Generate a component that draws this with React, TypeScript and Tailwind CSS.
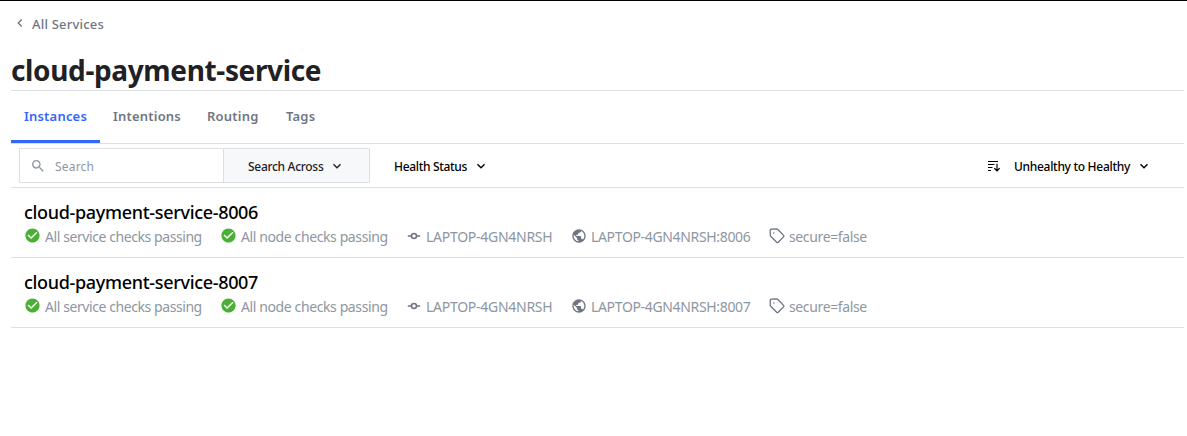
import { MdCheckCircle, MdKeyboardArrowDown, MdKeyboardArrowLeft, MdPublic, MdSearch } from "react-icons/md";

const instances = [
  { name: "cloud-payment-service-8006", address: "LAPTOP-4GN4NRSH:8006" },
  { name: "cloud-payment-service-8007", address: "LAPTOP-4GN4NRSH:8007" },
];

function NodeIcon() {
  return (
    <svg className="mb-0.5 size-[14px] shrink-0 text-[#6f7682]" viewBox="0 0 14 14" fill="none" stroke="currentColor" strokeWidth="1.6">
      <circle cx="7" cy="7" r="2.5" />
      <path d="M.8 7h3.6M9.6 7h3.6" />
    </svg>
  );
}

function TagIcon() {
  return (
    <svg className="mb-0.5 size-4 shrink-0 text-[#6f7682]" viewBox="0 0 16 16" fill="none" stroke="currentColor" strokeWidth="1.3" strokeLinejoin="round">
      <path d="M1.2 2.2Q1.2 1.3 2.1 1.2L7.8 1Q8.4 1 8.9 1.5L14.5 7.4Q15.2 8.2 14.5 8.9L9.2 14.3Q8.4 15 7.7 14.3L1.9 8.5Q1.3 8 1.3 7.3Z" />
      <circle cx="4.9" cy="5" r=".75" fill="currentColor" stroke="none" />
    </svg>
  );
}

function SortIcon() {
  return (
    <svg className="size-3 shrink-0" viewBox="0 0 12 12" fill="none" stroke="currentColor" strokeWidth="1.2">
      <path d="M0 1.5h10M0 4.5h6.5M0 7.5h4.5M0 10.5h3M9 3.8v7M6.3 8.2 9 10.8l2.7-2.6" />
    </svg>
  );
}

function Instance({ name, address }: { name: string; address: string }) {
  return (
    <li className="h-[70px] border-b border-[#dce0e6] pl-[13px] pt-[11px]">
      <h2 className="h-[26px] text-[18px] font-medium leading-[26px] tracking-[-0.32px] text-black">{name}</h2>
      <dl className="flex h-[23px] items-center whitespace-nowrap text-[14px] leading-[23px] tracking-[-0.42px] text-[#8e96a3]">
        <dd className="flex w-[196px] items-center gap-1">
          <MdCheckCircle className="mb-0.5 size-[17px] shrink-0 text-[#4aaf35]" />
          <span>All service checks passing</span>
        </dd>
        <dd className="flex w-[187px] items-center gap-1 tracking-[-0.39px]">
          <MdCheckCircle className="mb-0.5 size-[17px] shrink-0 text-[#4aaf35]" />
          <span>All node checks passing</span>
        </dd>
        <dd className="flex w-[164px] items-center gap-[5px] tracking-[-0.27px]">
          <NodeIcon />
          <span>LAPTOP-4GN4NRSH</span>
        </dd>
        <dd className="flex w-[198px] items-center gap-1 tracking-[-0.34px]">
          <MdPublic className="mb-0.5 size-4 shrink-0 text-[#6f7682]" />
          <span>{address}</span>
        </dd>
        <dd className="flex items-center gap-1 tracking-[-0.37px]">
          <TagIcon />
          <span>secure=false</span>
        </dd>
      </dl>
    </li>
  );
}

export default function App() {
  return (
    <main className="h-[436px] overflow-hidden border-t border-black bg-white pl-[11px] pr-[3px] font-['Noto_Sans',sans-serif]">
      <header className="h-[90px] border-b border-[#dce0e6]">
        <a className="flex h-[46px] items-center pl-px text-[13px] font-medium text-[#6f7682]">
          <MdKeyboardArrowLeft className="mb-0.5 size-4 shrink-0" />
          <span className="ml-1 mt-0.5 tracking-[0.2px]">All Services</span>
        </a>
        <h1 className="h-[44px] whitespace-nowrap text-[28px] font-bold leading-[46px] tracking-[-0.36px] text-[#1f2124]">cloud-payment-service</h1>
      </header>
      <nav className="flex h-[53px] border-b border-[#dce0e6] text-[13px] font-semibold leading-[51px] tracking-[0.2px] text-[#6f7682]">
        <a className="w-[89px] border-b-[3px] border-[#3366ff] pl-[13px] text-[#3366ff]">Instances</a>
        <a className="w-[94px] pl-[13px]">Intentions</a>
        <a className="w-[79px] pl-[13px]">Routing</a>
        <a className="pl-[13px]">Tags</a>
      </nav>
      <div className="flex h-11 items-center border-b border-[#dce0e6] pl-2 text-[12px] text-black">
        <div className="flex h-[35px] w-[351px] overflow-hidden rounded-[1px] border border-[#dce0e6]">
          <label className="flex w-[204px] items-center border-r border-[#dce0e6] pl-[10px] text-[#8e96a3]">
            <MdSearch className="size-4 shrink-0" />
            <input aria-label="Search" placeholder="Search" className="ml-[9px] mt-0.5 w-32 tracking-[0.2px] outline-none placeholder:text-[#8e96a3]" />
          </label>
          <button className="flex flex-1 items-center bg-[#f7f8fa] pl-6 font-medium text-[#1f2124]">
            <span className="mt-0.5 w-[81px] text-left tracking-[-0.3px]">Search Across</span>
            <MdKeyboardArrowDown className="size-4" />
          </button>
        </div>
        <button className="ml-6 flex items-center font-medium">
          <span className="mt-0.5 w-[79px] text-left tracking-[-0.33px]">Health Status</span>
          <MdKeyboardArrowDown className="size-4" />
        </button>
        <button className="ml-auto mr-[32px] flex items-center font-medium">
          <SortIcon />
          <span className="ml-[14px] mt-0.5 w-[122px] text-left tracking-[-0.3px]">Unhealthy to Healthy</span>
          <MdKeyboardArrowDown className="size-4" />
        </button>
      </div>
      <ul>
        {instances.map((instance) => <Instance key={instance.name} {...instance} />)}
      </ul>
    </main>
  );
}
